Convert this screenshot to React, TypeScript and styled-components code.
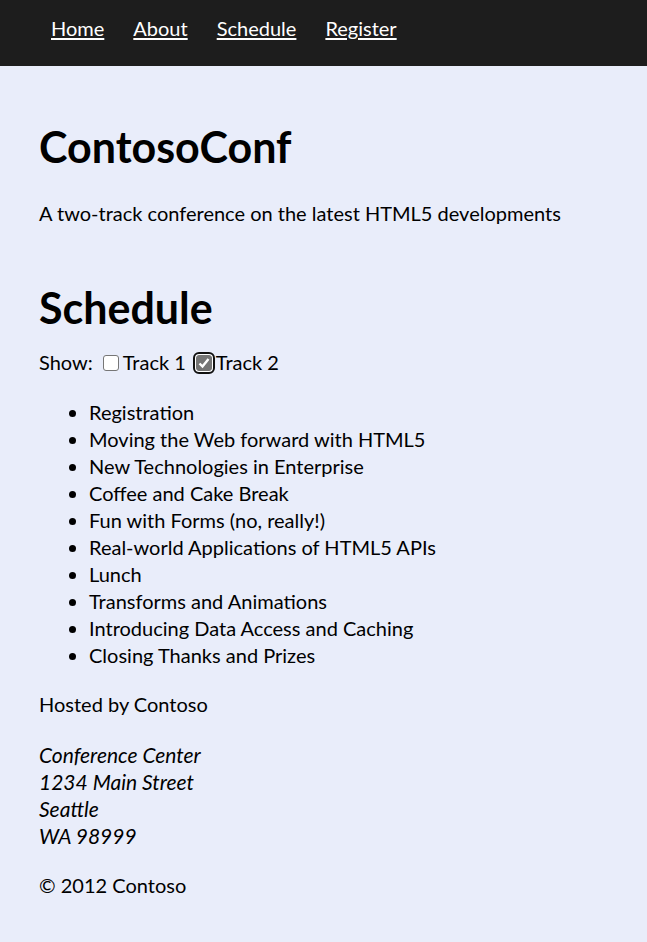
import React, { useState } from "react";
import styled, { createGlobalStyle } from "styled-components";

const GlobalStyle = createGlobalStyle`
  *, *::before, *::after { box-sizing: border-box; }
  body {
    margin: 0;
    background: #e9edfa;
    color: #000;
    font-family: Lato, Calibri, sans-serif;
    font-size: 20px;
    line-height: 27px;
  }
`;

const NavBar = styled.nav`
  display: flex;
  gap: 29px;
  padding: 15px 51px 24px;
  background: #1d1d1d;
`;

const NavLink = styled.a`
  color: #fff;
  text-decoration: underline;
  text-decoration-thickness: 2px;
  text-underline-offset: 2px;
`;

const Page = styled.div`
  padding: 54px 39px 43px;
`;

const Title = styled.h1`
  margin: 0;
  font-size: 43px;
  line-height: 54px;
  font-weight: 700;
`;

const Paragraph = styled.p`
  margin: 0;
`;

const Header = styled.header`
  display: flex;
  flex-direction: column;
  gap: 26px;
  margin-bottom: 54px;
`;

const Filters = styled.div`
  display: flex;
  align-items: center;
  gap: 10px;
  margin-top: 14px;
`;

const TrackLabel = styled.label`
  display: flex;
  align-items: center;
  gap: 4px;
`;

const CheckBox = styled.input`
  appearance: none;
  width: 16px;
  height: 16px;
  margin: 0;
  border: 1px solid #767676;
  border-radius: 3px;
  background: #fff;

  &:checked {
    border-color: #757575;
    background: #757575
      url("data:image/svg+xml,%3Csvg xmlns='http://www.w3.org/2000/svg' viewBox='0 0 14 14'%3E%3Cpath d='M2.5 7.5 5.5 10.5 11.5 3' fill='none' stroke='white' stroke-width='2.4'/%3E%3C/svg%3E")
      center / 14px no-repeat;
  }

  &:focus {
    outline: 2px solid #101010;
    outline-offset: 1px;
    box-shadow: 0 0 0 1px #fff;
  }
`;

const SessionList = styled.ul`
  margin: 23px 0 22px;
  padding-left: 50px;
`;

const Footer = styled.footer`
  display: flex;
  flex-direction: column;
  gap: 23px;
`;

const Address = styled.address`
  font-size: 21px;
  font-style: italic;
`;

const links = ["Home", "About", "Schedule", "Register"];

const sessions = [
  "Registration",
  "Moving the Web forward with HTML5",
  "New Technologies in Enterprise",
  "Coffee and Cake Break",
  "Fun with Forms (no, really!)",
  "Real-world Applications of HTML5 APIs",
  "Lunch",
  "Transforms and Animations",
  "Introducing Data Access and Caching",
  "Closing Thanks and Prizes",
];

export default function App() {
  const [track1, setTrack1] = useState(false);
  const [track2, setTrack2] = useState(true);

  return (
    <>
      <GlobalStyle />
      <NavBar>
        {links.map((link) => (
          <NavLink key={link} href={`#${link.toLowerCase()}`}>
            {link}
          </NavLink>
        ))}
      </NavBar>
      <Page>
        <Header>
          <Title>ContosoConf</Title>
          <Paragraph>A two-track conference on the latest HTML5 developments</Paragraph>
        </Header>
        <main>
          <Title as="h2">Schedule</Title>
          <Filters>
            <span>Show:</span>
            <TrackLabel>
              <CheckBox type="checkbox" checked={track1} onChange={(e) => setTrack1(e.target.checked)} />
              Track 1
            </TrackLabel>
            <TrackLabel>
              <CheckBox type="checkbox" autoFocus checked={track2} onChange={(e) => setTrack2(e.target.checked)} />
              Track 2
            </TrackLabel>
          </Filters>
          <SessionList>
            {sessions.map((session) => (
              <li key={session}>{session}</li>
            ))}
          </SessionList>
        </main>
        <Footer>
          <Paragraph>Hosted by Contoso</Paragraph>
          <Address>
            Conference Center
            <br />
            1234 Main Street
            <br />
            Seattle
            <br />
            WA 98999
          </Address>
          <Paragraph>© 2012 Contoso</Paragraph>
        </Footer>
      </Page>
    </>
  );
}
